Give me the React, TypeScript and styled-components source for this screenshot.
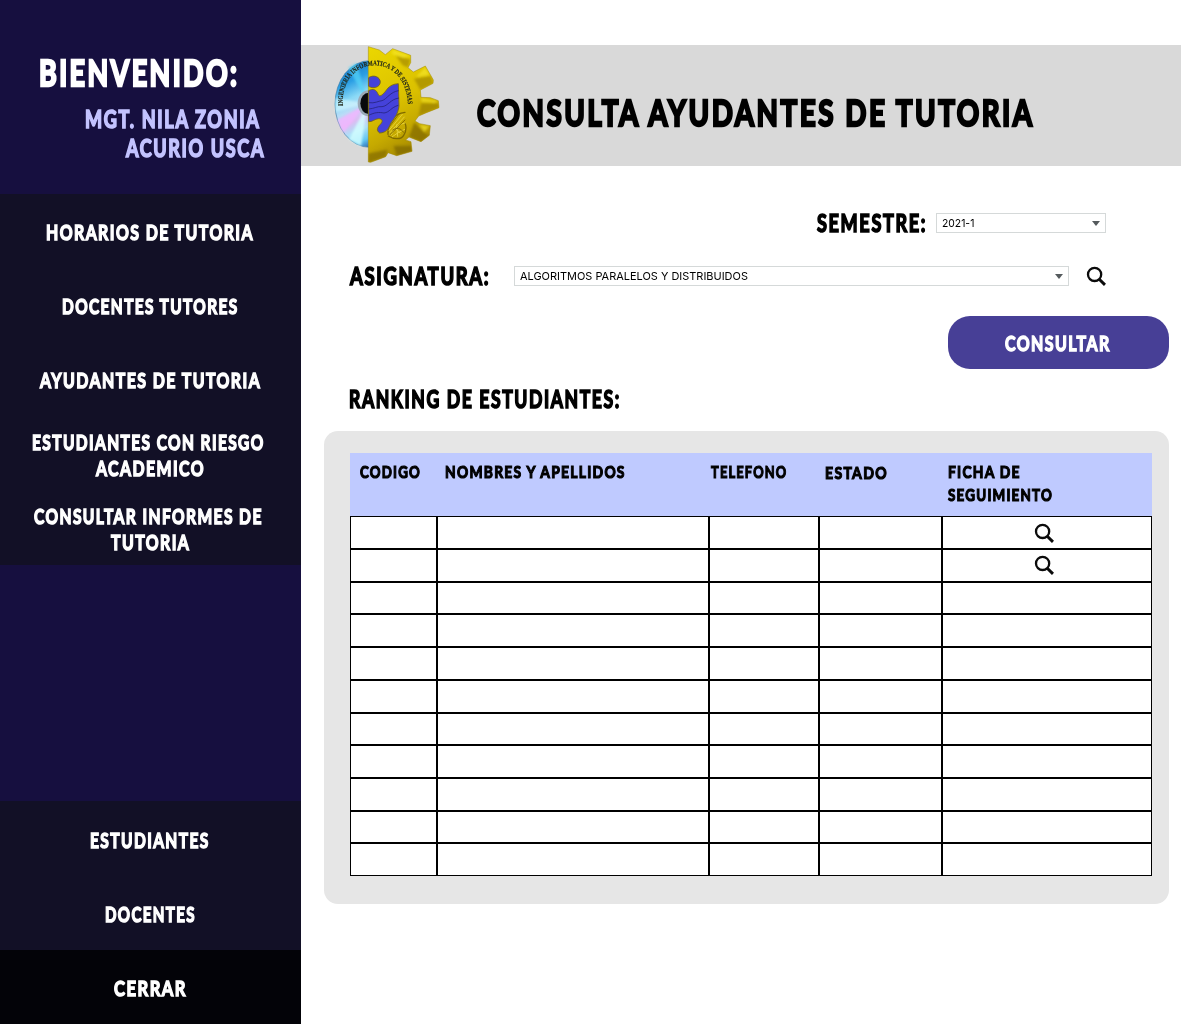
import React, { useLayoutEffect, useRef, useState } from "react";
import styled, { createGlobalStyle } from "styled-components";

const GlobalStyle = createGlobalStyle`
  * { box-sizing: border-box; }
  body { margin: 0; background: #fff; font-family: "Lato", "Liberation Sans", sans-serif; }
`;

/* ---------- lettering ---------- */

const Slot = styled.span<{ $width: number; $size: number; $plain?: boolean }>`
  display: block;
  flex: none;
  width: ${(p) => p.$width}px;
  height: ${(p) => p.$size}px;
  line-height: ${(p) => p.$size}px;
  font-family: ${(p) => (p.$plain ? '"Inter", sans-serif' : '"Lato", sans-serif')};
  font-size: ${(p) => (p.$plain ? p.$size : p.$size * 0.96)}px;
  font-weight: ${(p) => (p.$plain ? 400 : 700)};
  letter-spacing: ${(p) => (p.$plain ? "0" : "0.09em")};
  -webkit-text-stroke: ${(p) => (p.$plain ? "0" : "0.07em currentColor")};
  stroke-linejoin: round;
  white-space: nowrap;
  text-align: left;
`;

const Glyphs = styled.span`
  display: inline-block;
  transform-origin: 0 50%;
`;

interface LetteringProps {
  children: string;
  width: number;
  size: number;
  plain?: boolean;
}

/* Condenses a line of text horizontally until it fills its slot. */
function Lettering({ children, width, size, plain }: LetteringProps) {
  const ref = useRef<HTMLSpanElement>(null);
  const [ratio, setRatio] = useState(1);
  useLayoutEffect(() => {
    const el = ref.current;
    if (!el) return;
    const trailing = plain ? 0 : size * 0.06;
    setRatio(width / (el.offsetWidth - trailing));
  }, [children, width, size, plain]);
  return (
    <Slot $width={width} $size={size} $plain={plain}>
      <Glyphs ref={ref} style={{ transform: `scaleX(${ratio})` }}>
        {children}
      </Glyphs>
    </Slot>
  );
}

/* ---------- sidebar ---------- */

const Page = styled.div`
  display: flex;
  width: 1181px;
  height: 1024px;
  overflow: hidden;
  background: #fff;
`;

const Sidebar = styled.aside`
  display: flex;
  flex-direction: column;
  width: 301px;
  flex: none;
  background: #160f3f;
`;

const Welcome = styled.header`
  display: flex;
  flex-direction: column;
  height: 193.5px;
  padding: 54px 36px 0 39px;
  color: #fff;
`;

const UserName = styled.div`
  display: flex;
  flex-direction: column;
  align-items: flex-end;
  gap: 4px;
  margin-top: 15px;
  padding-right: 1px;
  color: #c3c3ff;
  > :first-child { margin-right: 5px; }
`;

const Menu = styled.nav`
  display: flex;
  flex-direction: column;
  background: #121026;
`;

const MenuBottom = styled(Menu)`
  margin-top: auto;
`;

const MenuItem = styled.a<{ $dark?: boolean }>`
  display: flex;
  flex-direction: column;
  align-items: center;
  justify-content: center;
  gap: 4px;
  height: 74.3px;
  padding: 2.5px 2px 0 0;
  color: #fff;
  background: ${(p) => (p.$dark ? "#030308" : "transparent")};
`;

const Shift = styled.span`
  display: block;
  &:first-child:not(:last-child) { margin-right: 4px; }
`;

/* ---------- main ---------- */

const Main = styled.main`
  display: flex;
  flex-direction: column;
  flex: 1;
  padding-top: 45px;
  color: #000;
`;

const Banner = styled.header`
  display: flex;
  align-items: center;
  height: 120.5px;
  padding-left: 24px;
  background: #d9d9d9;
`;

const Title = styled.h1`
  display: flex;
  margin: 15px 0 0 27px;
`;

const Filters = styled.section`
  display: flex;
  flex-direction: column;
  align-items: flex-end;
  padding: 44.5px 75px 0 0;
`;

const Field = styled.div`
  display: flex;
  align-items: center;
  height: 26px;
  margin-bottom: 27px;
`;

const FieldLabel = styled.label`
  display: flex;
  padding-bottom: 2px;
`;

const Select = styled.div<{ $width: number; $gap: number }>`
  display: flex;
  align-items: center;
  justify-content: space-between;
  width: ${(p) => p.$width}px;
  height: 20px;
  margin-left: ${(p) => p.$gap}px;
  padding: 0 5px;
  border: 1px solid #d5d9d9;
  background: #fff;
`;

const Arrow = styled.i`
  border: 4.5px solid transparent;
  border-top: 5px solid #555a5d;
  border-bottom: 0;
`;

const IconSlot = styled.span`
  display: flex;
  margin-left: 17px;
`;

const Button = styled.button`
  display: flex;
  align-items: center;
  justify-content: center;
  width: 220.5px;
  height: 53px;
  margin: -0.5px 12.5px 0 auto;
  padding: 2px 2px 0 0;
  border: 0;
  border-radius: 22px;
  color: #fff;
  background: #473f96;
`;

const Ranking = styled.h2`
  display: flex;
  margin: 17px 0 0 48px;
`;

const Panel = styled.section`
  width: 844.5px;
  height: 473px;
  margin: 20px 0 0 23px;
  padding: 22px 16.5px 27px 26px;
  border-radius: 14px;
  background: #e6e6e6;
`;

const columns = "87px 272px 110px 123px 210px";

const Head = styled.div`
  display: grid;
  grid-template-columns: ${columns};
  height: 63.7px;
  padding-top: 10px;
  background: #bfcaff;
`;

const HeadCell = styled.div<{ $left: number; $top?: number }>`
  display: flex;
  flex-direction: column;
  gap: 5px;
  padding: ${(p) => p.$top ?? 0}px 0 0 ${(p) => p.$left}px;
`;

const Body = styled.div`
  display: grid;
  grid-template-columns: ${columns};
  grid-template-rows: repeat(11, 32.73px);
`;

const Cell = styled.div`
  display: flex;
  align-items: center;
  justify-content: center;
  padding-right: 6px;
  border: 1px solid #000;
  background: #fff;
`;

/* ---------- drawings ---------- */

function SearchIcon() {
  return (
    <svg width="20" height="20" viewBox="0 0 20 20" fill="none" stroke="#0b0b0b">
      <circle cx="8.6" cy="8.4" r="6.6" strokeWidth="2.3" />
      <path d="M13 13 L19 18.8" strokeWidth="3" />
    </svg>
  );
}

const gear =
  "M130 20 L163 30 L181 44 L203 26 L257 46 L257 68 L249 83 L265 96 L301 78 L325 120 L324 130 L286 150 L288 172 L316 173 L340 182 L342 203 L304 218 L281 228 L270 243 L284 251 L316 257 L313 286 L288 305 L252 291 L242 300 L258 305 L261 334 L215 347 L189 338 L182 350 L137 367 L130 366 Z";

function Logo() {
  return (
    <svg width="125" height="130" viewBox="0 0 375 390">
      <defs>
        <linearGradient id="disc" x1="0.1" y1="0" x2="0.5" y2="1">
          <stop offset="0" stopColor="#1467b4" />
          <stop offset="0.25" stopColor="#2b9fe4" />
          <stop offset="0.42" stopColor="#8ad9f6" />
          <stop offset="0.54" stopColor="#b9dcf7" />
          <stop offset="0.66" stopColor="#dcbcf2" />
          <stop offset="0.78" stopColor="#aee0f7" />
          <stop offset="0.9" stopColor="#62c6f2" />
          <stop offset="1" stopColor="#2b69b4" />
        </linearGradient>
        <linearGradient id="gold" x1="0.1" y1="0" x2="0.45" y2="1">
          <stop offset="0" stopColor="#ead600" />
          <stop offset="0.5" stopColor="#dbc100" />
          <stop offset="0.75" stopColor="#c5a900" />
          <stop offset="1" stopColor="#9f8300" />
        </linearGradient>
        <filter id="soft" x="-10%" y="-10%" width="120%" height="120%">
          <feGaussianBlur stdDeviation="3" />
        </filter>
        <clipPath id="half"><rect x="0" y="0" width="131" height="390" /></clipPath>
        <clipPath id="gearClip"><path d={gear} /></clipPath>
        <path id="motto" d="M54 197 C42 44 242 28 249 194" />
      </defs>
      <g clipPath="url(#half)">
        <ellipse cx="134" cy="192" rx="104" ry="130" fill="url(#disc)" stroke="#3b7ba8" strokeWidth="2" />
        <g filter="url(#soft)">
          <path d="M128 190 L70 83 L95 68 Z" fill="#55d4f7" opacity="0.7" />
          <path d="M128 190 L31 175 L32 215 Z" fill="#d9faff" opacity="0.6" />
          <path d="M128 190 L38 240 L55 278 Z" fill="#f2b5ff" opacity="0.8" />
          <path d="M128 190 L72 298 L108 319 Z" fill="#d5ffff" opacity="0.8" />
        </g>
        <ellipse cx="130" cy="190" rx="32" ry="39" fill="#9aa9b6" />
        <ellipse cx="131" cy="190" rx="25" ry="32" fill="#08090c" />
      </g>
      <path d={gear} fill="url(#gold)" stroke="#a08800" strokeWidth="1.5" strokeLinejoin="round" />
      <g clipPath="url(#gearClip)" filter="url(#soft)">
        <path d="M212 47 L257 58 L249 83 L232 75 Z" fill="#a88f00" opacity="0.75" />
        <path d="M267 116 L318 108 L325 130 L286 150 Z" fill="#a58c00" opacity="0.75" />
        <path d="M288 190 L342 190 V203 L281 228 Z" fill="#a08600" opacity="0.8" />
        <path d="M268 247 L300 280 L313 286 L288 305 L252 291 Z" fill="#866d00" opacity="0.75" />
        <path d="M206 318 L260 318 L261 334 L215 347 Z" fill="#7d6600" opacity="0.7" />
        <path d="M130 340 L187 329 L182 350 L130 367Z" fill="#806900" opacity="0.65" />
        <path d="M204 29 L255 47 L236 54 L199 42 Z M300 81 L314 105 L274 111 Z M288 174 L338 182 L330 188 L290 184Z M282 253 L314 258 L298 276Z" fill="#f5e52a" opacity="0.7" />
      </g>
      <g fill="none" strokeLinecap="round">
        <path d="M189 283 C188 245 208 220 240 217 M190 288 C207 299 229 299 236 286 M236 286 C247 270 242 253 240 250" stroke="#7f6a00" strokeWidth="4" />
        <path d="M192 271 L232 223 M194 279 L238 231 M198 285 Q215 252 240 249 M202 290 Q218 277 239 268 M207 262 L226 279 M215 254 L218 289" stroke="#e9d640" strokeWidth="2.5" />
        <path d="M190 264 L222 222 M196 283 L240 240 M203 270 Q222 256 236 277" stroke="#796300" strokeWidth="2.5" />
      </g>
      <g stroke="#77680e" strokeWidth="2.5" fill="#4542da">
        <path d="M131 113 C145 103 165 110 166 126 C165 143 143 147 131 139 Z" />
        <path d="M131 152 C144 144 155 150 159 162 C163 174 174 164 185 149 C195 135 208 132 220 131 L222 198 C219 224 206 237 197 250 C190 267 184 278 164 279 C152 271 158 261 166 253 C176 243 171 236 161 236 C149 236 142 247 131 245 Z" />
      </g>
      <path d="M131 188 C150 191 159 183 171 182 C185 178 196 155 221 152 M131 207 C148 206 157 198 171 200 C190 198 195 178 222 174 M131 226 C149 217 162 216 177 219 C194 217 198 202 220 196" fill="none" stroke="#25247f" strokeWidth="2.5" />
      <text fontFamily="Liberation Serif, serif" fontWeight="700" fontSize="21" fill="#222719" stroke="#222719" strokeWidth="0.5">
        <textPath href="#motto" textLength="345" lengthAdjust="spacingAndGlyphs">INGENIERIA INFORMATICA Y DE SISTEMAS</textPath>
      </text>
    </svg>
  );
}

/* ---------- content ---------- */

type Line = [string, number];

const menuTop: Line[][] = [
  [["HORARIOS DE TUTORIA", 207]],
  [["DOCENTES TUTORES", 176]],
  [["AYUDANTES DE TUTORIA", 220]],
  [["ESTUDIANTES CON RIESGO", 232], ["ACADEMICO", 108]],
  [["CONSULTAR INFORMES DE", 228], ["TUTORIA", 78]],
];

const menuBottom: Line[][] = [[["ESTUDIANTES", 119]], [["DOCENTES", 90]], [["CERRAR", 72]]];

const heads: { left: number; top?: number; lines: Line[] }[] = [
  { left: 10, lines: [["CODIGO", 60]] },
  { left: 8, lines: [["NOMBRES Y APELLIDOS", 180]] },
  { left: 2, lines: [["TELEFONO", 76]] },
  { left: 6, top: 1, lines: [["ESTADO", 62]] },
  { left: 5.5, lines: [["FICHA DE", 72], ["SEGUIMIENTO", 104]] },
];

function Entry({ lines, dark }: { lines: Line[]; dark?: boolean }) {
  return (
    <MenuItem $dark={dark}>
      {lines.map(([text, width]) => (
        <Shift key={text}>
          <Lettering width={width} size={22}>{text}</Lettering>
        </Shift>
      ))}
    </MenuItem>
  );
}

export default function App() {
  return (
    <>
      <GlobalStyle />
      <Page>
        <Sidebar>
          <Welcome>
            <Lettering width={199} size={37}>BIENVENIDO:</Lettering>
            <UserName>
              <Lettering width={174} size={25}>MGT. NILA ZONIA</Lettering>
              <Lettering width={138} size={25}>ACURIO USCA</Lettering>
            </UserName>
          </Welcome>
          <Menu>
            {menuTop.map((lines) => <Entry key={lines[0][0]} lines={lines} />)}
          </Menu>
          <MenuBottom>
            {menuBottom.map((lines, i) => <Entry key={lines[0][0]} lines={lines} dark={i === 2} />)}
          </MenuBottom>
        </Sidebar>
        <Main>
          <Banner>
            <Logo />
            <Title><Lettering width={556} size={37}>CONSULTA AYUDANTES DE TUTORIA</Lettering></Title>
          </Banner>
          <Filters>
            <Field>
              <FieldLabel><Lettering width={109} size={25}>SEMESTRE:</Lettering></FieldLabel>
              <Select $width={170} $gap={10}>
                <Lettering width={32} size={11} plain>2021-1</Lettering>
                <Arrow />
              </Select>
            </Field>
            <Field>
              <FieldLabel><Lettering width={139} size={25}>ASIGNATURA:</Lettering></FieldLabel>
              <Select $width={555} $gap={25}>
                <Lettering width={228} size={11} plain>ALGORITMOS PARALELOS Y DISTRIBUIDOS</Lettering>
                <Arrow />
              </Select>
              <IconSlot><SearchIcon /></IconSlot>
            </Field>
          </Filters>
          <Button><Lettering width={105} size={21}>CONSULTAR</Lettering></Button>
          <Ranking><Lettering width={271} size={25}>RANKING DE ESTUDIANTES:</Lettering></Ranking>
          <Panel>
            <Head>
              {heads.map((head) => (
                <HeadCell key={head.lines[0][0]} $left={head.left} $top={head.top}>
                  {head.lines.map(([text, width]) => (
                    <Lettering key={text} width={width} size={18}>{text}</Lettering>
                  ))}
                </HeadCell>
              ))}
            </Head>
            <Body>
              {Array.from({ length: 55 }, (_, i) => (
                <Cell key={i}>{(i === 4 || i === 9) && <SearchIcon />}</Cell>
              ))}
            </Body>
          </Panel>
        </Main>
      </Page>
    </>
  );
}
